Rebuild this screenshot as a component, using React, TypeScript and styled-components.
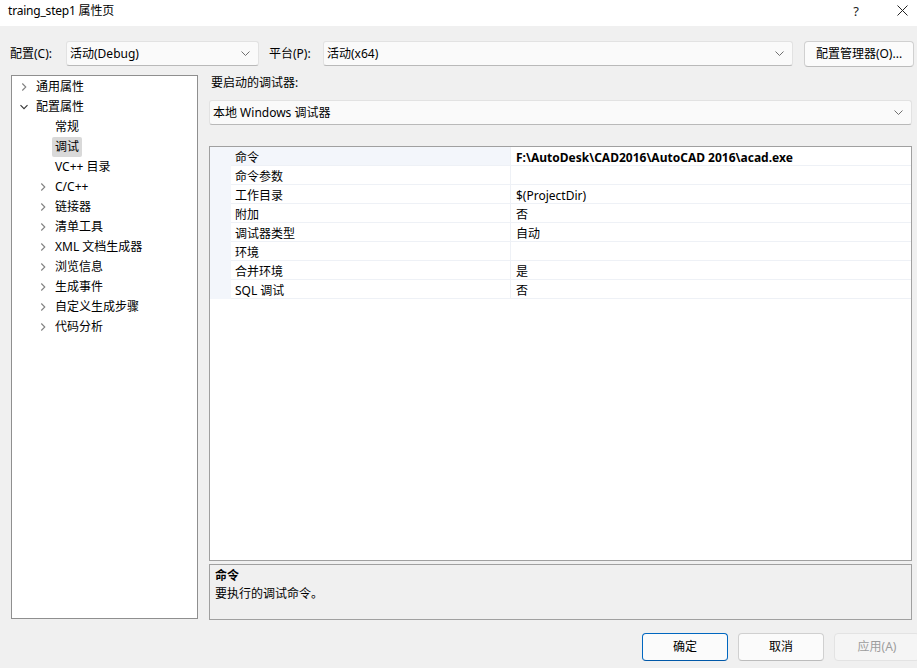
import React from 'react'
import styled, { createGlobalStyle } from 'styled-components'

const GlobalStyle = createGlobalStyle`
  html, body {
    margin: 0;
    padding: 0;
    background: #f0f0f0;
  }
  body {
    font-family: "Noto Sans", "Noto Sans CJK SC", sans-serif;
    font-size: 12px;
    color: #000;
  }
`

const Chevron = ({ open, color = '#707070' }: { open?: boolean; color?: string }) => (
  <svg width="10" height="10" viewBox="0 0 10 10">
    {open ? (
      <path d="M1.5 3.2 L5 6.7 L8.5 3.2" fill="none" stroke={color} strokeWidth="1.1" />
    ) : (
      <path d="M3.3 1.5 L6.8 5 L3.3 8.5" fill="none" stroke={color} strokeWidth="1.1" />
    )}
  </svg>
)

const ComboArrow = () => (
  <svg width="9" height="5" viewBox="0 0 9 5">
    <path d="M0.5 0.5 L4.5 4.5 L8.5 0.5" fill="none" stroke="#606060" strokeWidth="0.9" />
  </svg>
)

type TreeItem = { label: string; level: 0 | 1; arrow?: 'open' | 'closed'; selected?: boolean }

const treeItems: TreeItem[] = [
  { label: '通用属性', level: 0, arrow: 'closed' },
  { label: '配置属性', level: 0, arrow: 'open' },
  { label: '常规', level: 1 },
  { label: '调试', level: 1, selected: true },
  { label: 'VC++ 目录', level: 1 },
  { label: 'C/C++', level: 1, arrow: 'closed' },
  { label: '链接器', level: 1, arrow: 'closed' },
  { label: '清单工具', level: 1, arrow: 'closed' },
  { label: 'XML 文档生成器', level: 1, arrow: 'closed' },
  { label: '浏览信息', level: 1, arrow: 'closed' },
  { label: '生成事件', level: 1, arrow: 'closed' },
  { label: '自定义生成步骤', level: 1, arrow: 'closed' },
  { label: '代码分析', level: 1, arrow: 'closed' },
]

const props = [
  { name: '命令', value: 'F:\\AutoDesk\\CAD2016\\AutoCAD 2016\\acad.exe', bold: true },
  { name: '命令参数', value: '' },
  { name: '工作目录', value: '$(ProjectDir)' },
  { name: '附加', value: '否' },
  { name: '调试器类型', value: '自动' },
  { name: '环境', value: '' },
  { name: '合并环境', value: '是' },
  { name: 'SQL 调试', value: '否' },
]

export default function App() {
  return (
    <>
      <GlobalStyle />
      <Window>
        <TitleBar>
          <Title>traing_step1 属性页</Title>
          <TitleButtons>
            <TitleBtn>?</TitleBtn>
            <TitleBtn>
              <svg width="11" height="11" viewBox="0 0 11 11">
                <path d="M0.5 0.5 L10.5 10.5 M10.5 0.5 L0.5 10.5" stroke="#222" strokeWidth="1" />
              </svg>
            </TitleBtn>
          </TitleButtons>
        </TitleBar>

        <Body>
          <TopRow>
            <Label $width={56}>配置(C):</Label>
            <Combo $width={193}>
              <span>活动(Debug)</span>
              <ComboArrow />
            </Combo>
            <Label $width={54} $ml={10}>平台(P):</Label>
            <Combo $width={470}>
              <span>活动(x64)</span>
              <ComboArrow />
            </Combo>
            <Button $width={110} $ml={11}>配置管理器(O)...</Button>
          </TopRow>

          <Main>
            <Tree>
              {treeItems.map((it) => (
                <TreeRow key={it.label} $level={it.level}>
                  <ArrowSlot>{it.arrow && <Chevron open={it.arrow === 'open'} color={it.arrow === 'open' ? '#333' : '#808080'} />}</ArrowSlot>
                  <TreeLabel $selected={it.selected}>{it.label}</TreeLabel>
                </TreeRow>
              ))}
            </Tree>

            <RightCol>
              <SectionLabel>要启动的调试器:</SectionLabel>
              <Combo $width={703} $mt={5}>
                <span>本地 Windows 调试器</span>
                <ComboArrow />
              </Combo>

              <Grid>
                {props.map((p, i) => (
                  <PropRow key={p.name}>
                    <Gutter />
                    <NameCell $selected={i === 0}>{p.name}</NameCell>
                    <ValueCell $bold={p.bold}>{p.value}</ValueCell>
                  </PropRow>
                ))}
              </Grid>

              <Description>
                <DescTitle>命令</DescTitle>
                <DescText>要执行的调试命令。</DescText>
              </Description>
            </RightCol>
          </Main>

          <Footer>
            <Button $width={86} $height={28} $primary>确定</Button>
            <Button $width={86} $height={28}>取消</Button>
            <Button $width={86} $height={28} $disabled>应用(A)</Button>
          </Footer>
        </Body>
      </Window>
    </>
  )
}

const Window = styled.div`
  width: 917px;
  height: 668px;
  display: flex;
  flex-direction: column;
  background: #f0f0f0;
  overflow: hidden;
`

const TitleBar = styled.div`
  height: 26px;
  background: #ffffff;
  display: flex;
  align-items: center;
  justify-content: space-between;
  padding-left: 8px;
`

const Title = styled.div`
  font-size: 12px;
  line-height: 16px;
  margin-top: -5px;
  letter-spacing: -0.2px;
`

const TitleButtons = styled.div`
  display: flex;
  align-items: center;
  margin-top: -5px;
  margin-right: -8px;
`

const TitleBtn = styled.div`
  width: 46px;
  display: flex;
  justify-content: center;
  font-size: 13px;
  color: #222;
`

const Body = styled.div`
  flex: 1;
  display: flex;
  flex-direction: column;
  padding: 15px 0 0 10px;
`

const TopRow = styled.div`
  display: flex;
  align-items: center;
  height: 25px;
`

const Label = styled.div<{ $width: number; $ml?: number }>`
  margin-left: ${(p) => p.$ml ?? 0}px;
  width: ${(p) => p.$width}px;
  line-height: 16px;
`

const Combo = styled.div<{ $width: number; $mt?: number }>`
  box-sizing: border-box;
  width: ${(p) => p.$width}px;
  height: 25px;
  margin-top: ${(p) => p.$mt ?? 0}px;
  background: #fafafa;
  border: 1px solid #e2e2e2;
  border-bottom-color: #b9b9b9;
  border-radius: 3px;
  display: flex;
  align-items: center;
  justify-content: space-between;
  padding: 0 8px 0 3px;
  line-height: 16px;
`

const Button = styled.div<{ $width: number; $height?: number; $ml?: number; $primary?: boolean; $disabled?: boolean }>`
  box-sizing: border-box;
  flex-shrink: 0;
  width: ${(p) => p.$width}px;
  height: ${(p) => p.$height ?? 26}px;
  margin-left: ${(p) => p.$ml ?? 0}px;
  border-radius: 4px;
  border: 1px solid ${(p) => (p.$primary ? '#0067c0' : p.$disabled ? '#e3e3e3' : '#d0d0d0')};
  border-bottom-color: ${(p) => (p.$primary ? '#0058a8' : p.$disabled ? '#e3e3e3' : '#bcbcbc')};
  background: ${(p) => (p.$disabled ? '#f5f5f5' : '#fbfbfb')};
  color: ${(p) => (p.$disabled ? '#9d9d9d' : '#000')};
  display: flex;
  align-items: center;
  justify-content: center;
  line-height: 16px;
`

const Main = styled.div`
  display: flex;
  margin-top: 9px;
  margin-left: 1px;
  gap: 11px;
`

const Tree = styled.div`
  box-sizing: border-box;
  width: 187px;
  height: 544px;
  background: #fff;
  border: 1px solid #8f8f8f;
  padding-top: 1px;
`

const TreeRow = styled.div<{ $level: number }>`
  display: flex;
  align-items: center;
  height: 20px;
  padding-left: ${(p) => (p.$level === 0 ? 7 : 26)}px;
`

const ArrowSlot = styled.div`
  width: 14px;
  height: 10px;
  display: flex;
  align-items: center;
  margin-right: 3px;
`

const TreeLabel = styled.div<{ $selected?: boolean }>`
  line-height: 16px;
  padding: 2px 3px;
  margin-left: -3px;
  border-radius: 2px;
  background: ${(p) => (p.$selected ? '#d9d9d9' : 'transparent')};
`

const RightCol = styled.div`
  width: 703px;
  display: flex;
  flex-direction: column;
`

const SectionLabel = styled.div`
  height: 20px;
  line-height: 16px;
  padding-left: 2px;
`

const Grid = styled.div`
  box-sizing: border-box;
  height: 415px;
  margin-top: 21px;
  background: #fff;
  border: 1px solid #a0a0a0;
`

const PropRow = styled.div`
  display: flex;
  box-sizing: border-box;
  height: 19px;
  border-bottom: 1px solid #eef1f6;
`

const Gutter = styled.div`
  width: 21px;
  background: #f3f6fb;
  margin-bottom: -1px;
`

const NameCell = styled.div<{ $selected?: boolean }>`
  width: 280px;
  padding: 3px 0 0 4px;
  box-sizing: border-box;
  border-right: 1px solid #eef1f6;
  background: ${(p) => (p.$selected ? '#f3f6fb' : '#fff')};
  line-height: 15px;
`

const ValueCell = styled.div<{ $bold?: boolean }>`
  flex: 1;
  padding: 3px 0 0 5px;
  font-weight: ${(p) => (p.$bold ? 700 : 400)};
  line-height: 15px;
`

const Description = styled.div`
  box-sizing: border-box;
  height: 56px;
  margin-top: 3px;
  border: 1px solid #a0a0a0;
  background: #f0f0f0;
  padding: 3px 5px;
`

const DescTitle = styled.div`
  font-weight: 700;
  line-height: 16px;
`

const DescText = styled.div`
  line-height: 18px;
  margin-top: 1px;
`

const Footer = styled.div`
  display: flex;
  justify-content: flex-end;
  gap: 10px;
  margin-top: 13px;
  margin-right: -3px;
`
